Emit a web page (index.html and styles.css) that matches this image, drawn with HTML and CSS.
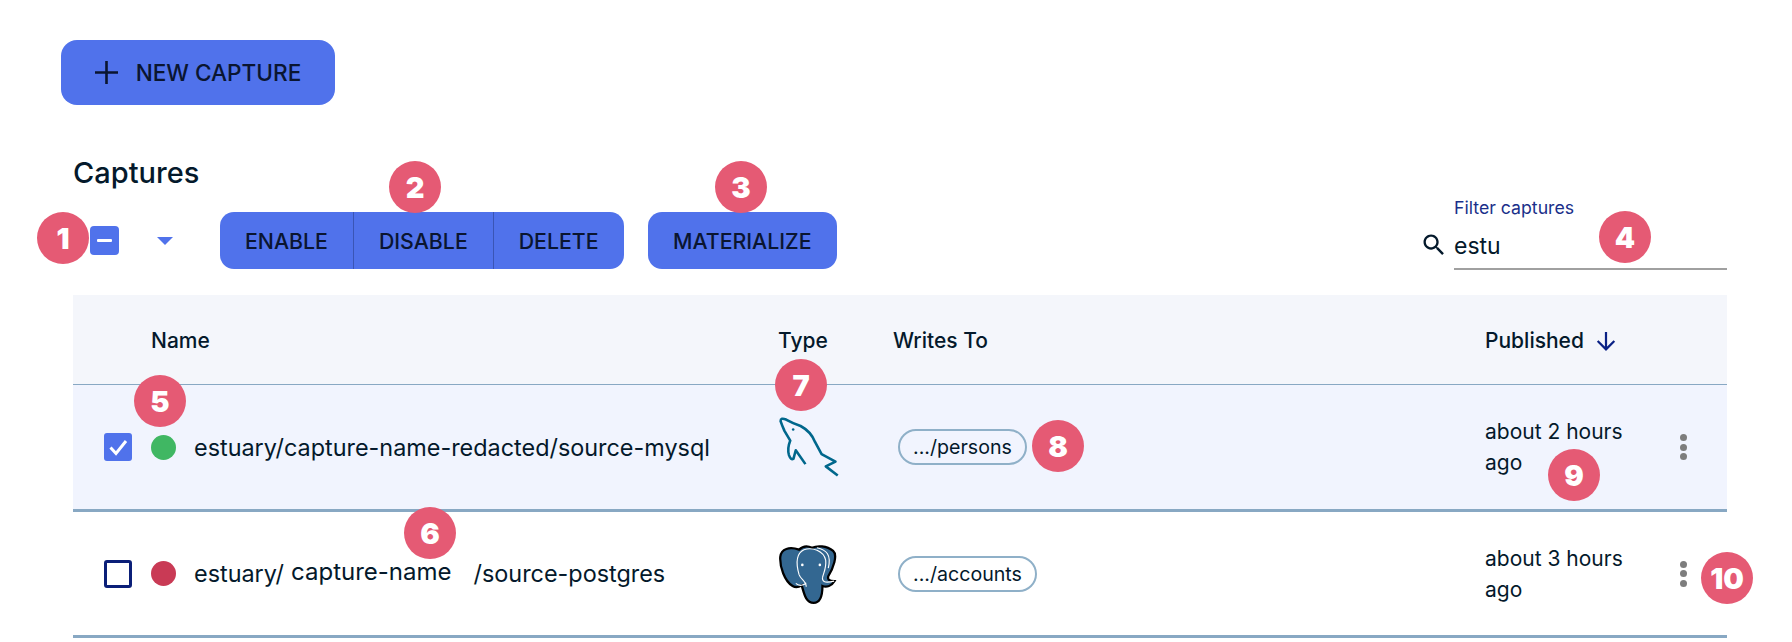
FILE: index.html
```html
<!DOCTYPE html>
<html lang="en">
<head>
  <meta charset="UTF-8">
  <title>Captures</title>
  <link rel="stylesheet" href="styles.css">
</head>
<body>
  <div class="page">
    <button class="btn btn-new">
      <svg class="plus" viewBox="0 0 23 23"><path d="M11.5 0v23M0 11.5h23"/></svg>
      NEW CAPTURE
    </button>
    <h2 class="title">Captures</h2>

    <div class="toolbar">
      <span class="check check-some"><i></i></span>
      <span class="caret"></span>
      <div class="btn-group">
        <button class="btn">ENABLE</button>
        <button class="btn">DISABLE</button>
        <button class="btn">DELETE</button>
      </div>
      <button class="btn btn-mat">MATERIALIZE</button>
      <div class="filter">
        <svg class="search" viewBox="0 0 24 24"><path d="M15.5 14h-.79l-.28-.27C15.41 12.59 16 11.11 16 9.5 16 5.91 13.09 3 9.5 3S3 5.91 3 9.5 5.91 16 9.5 16c1.61 0 3.09-.59 4.23-1.57l.27.28v.79l5 4.99L20.49 19l-4.99-5zm-6 0C7.01 14 5 11.99 5 9.5S7.01 5 9.5 5 14 7.01 14 9.5 11.99 14 9.5 14z"/></svg>
        <div class="filter-field">
          <label>Filter captures</label>
          <div class="filter-value">estu</div>
        </div>
      </div>
    </div>

    <div class="table">
      <div class="row head">
        <div></div>
        <div>Name</div>
        <div>Type</div>
        <div>Writes To</div>
        <div class="sort">Published
          <svg viewBox="0 0 18 18"><path d="M9 1v15.500M1.500 9L9 16.500 16.500 9"/></svg>
        </div>
        <div></div>
      </div>

      <div class="row selected">
        <div class="cell-check"><span class="check check-on"><svg viewBox="0 0 28 28"><path d="M6.500 14.500l5.500 6L22 8"/></svg></span></div>
        <div class="name"><span class="dot green"></span>estuary/capture-name-redacted/source-mysql</div>
        <div class="logo">
          <svg class="mysql" viewBox="80 45 192 190">
            <path d="M265 228L228 200L258 185L215 162L195 125Q182 92 150 75Q125 66 105 55Q88 48 88 60Q92 72 100 90L118 120Q108 145 114 165Q120 182 128 176L135 150L165 193"/>
            <circle class="mysql-eye" cx="127" cy="86" r="4"/>
          </svg>
        </div>
        <div><span class="chip">.../persons</span></div>
        <div class="when">about 2 hours ago</div>
        <div class="more"><i></i><i></i><i></i></div>
      </div>

      <div class="row">
        <div class="cell-check"><span class="check"></span></div>
        <div class="name"><span class="dot red"></span>estuary/<span class="redacted">capture-name</span>/source-postgres</div>
        <div class="logo">
          <svg class="pg" viewBox="85 48 185 190">
            <path class="pg-body" d="M150 68C120 58 95 65 92 90C90 120 105 165 130 180C140 186 150 183 158 178C166 205 170 231 195 232C215 232 222 210 222 180C235 185 250 180 259 165C240 165 238 158 240 150C255 125 270 85 255 72C235 55 205 55 190 62C175 55 160 58 150 68Z"/>
            <path class="pg-line" d="M150 145C140 110 140 80 165 68C190 60 225 70 232 100C235 125 225 140 222 155M150 145C155 160 172 165 172 182M205 62C235 68 250 85 240 125M222 155C222 170 235 170 258 165M140 172C150 182 165 178 172 170"/>
            <circle class="pg-eye" cx="160" cy="115" r="4"/>
            <circle class="pg-eye" cx="214" cy="115" r="4"/>
          </svg>
        </div>
        <div><span class="chip">.../accounts</span></div>
        <div class="when">about 3 hours ago</div>
        <div class="more"><i></i><i></i><i></i></div>
      </div>
    </div>

    <span class="badge b1">1</span>
    <span class="badge b2">2</span>
    <span class="badge b3">3</span>
    <span class="badge b4">4</span>
    <span class="badge b5">5</span>
    <span class="badge b6">6</span>
    <span class="badge b7">7</span>
    <span class="badge b8">8</span>
    <span class="badge b9">9</span>
    <span class="badge b10">10</span>
  </div>
</body>
</html>
```

FILE: styles.css
```css
* { margin:0; padding:0; box-sizing:border-box; }
body { font-family:Inter,"Liberation Sans",sans-serif; background:#fff; color:#04192b; overflow:hidden; }
.page { position:relative; width:1792px; height:642px; padding:40px 65px 0 73px; }

.btn { display:inline-flex; align-items:center; justify-content:center; height:57px; padding:0 25px;
       border:0; background:#5072eb; color:#0a1530; font:500 21.300px Inter,sans-serif; border-radius:14px; }
.btn-new { width:274px; height:65px; margin-left:-12px; gap:18px; font-size:22.600px; border-radius:16px; display:flex; }
.plus { width:23px; height:23px; }
.plus path { stroke:#0a1530; stroke-width:2.6; fill:none; }
.title { font-size:29px; font-weight:500; line-height:32px; margin-top:52px; }

.toolbar { display:flex; align-items:center; height:57px; margin-top:23px; padding-left:17px; }
.check { display:inline-flex; align-items:center; justify-content:center; width:28px; height:28px;
         border:3px solid #0b1f78; border-radius:3px; }
.check-some { width:29px; height:29px; background:#5072eb; border:0; border-radius:4px; }
.check-some i { width:15px; height:3px; background:#fff; border-radius:1px; }
.check-on { background:#5072eb; border:0; }
.check-on svg { width:28px; height:28px; }
.check-on path { stroke:#fff; stroke-width:3; fill:none; }
.caret { width:0; height:0; margin-left:38px; border:8px solid transparent; border-top:8px solid #5072eb; border-bottom:0; }
.btn-group { display:flex; margin-left:47px; background:#5072eb; border-radius:14px; }
.btn-group .btn { border-radius:0; background:none; }
.btn-group .btn + .btn { border-left:1px solid #3a55b5; }
.btn-mat { margin-left:24px; padding:0 25.500px; }

.filter { display:flex; align-items:flex-end; gap:6px; margin-left:auto; align-self:flex-end; margin-bottom:-1px; }
.search { width:28px; height:28px; fill:#04192b; margin-bottom:11px; }
.filter-field { width:273px; height:73px; border-bottom:2px solid #a0a0a0; }
.filter-field label { display:block; font-size:17.700px; color:#1a2f8a; line-height:22px; }
.filter-value { font-size:23px; line-height:32px; margin-top:11px; }

.table { margin-top:26px; }
.row { display:grid; grid-template-columns:78px 627px 115px 592px 175px 67px; align-items:center;
       height:126px; border-bottom:3px solid #88a8c3; font-size:21px; }
.head { height:90px; background:#f4f6fb; border-bottom:1px solid #88a8c3; font-weight:500; padding-top:2px; }
.selected { background:#f1f4fe; height:127px; }
.cell-check { padding-left:31px; display:flex; }
.name { display:flex; align-items:center; font-size:23.400px; white-space:pre; }
.dot { width:25px; height:25px; border-radius:50%; margin-right:18px; }
.green { background:#40b763; }
.red { background:#c93a55; }
.redacted { font-size:24px; margin:-4px 22px 0 7px; }
.sort { display:flex; align-items:center; gap:12px; }
.sort svg { width:20px; height:20px; }
.sort path { stroke:#0a2185; stroke-width:2; fill:none; }
.logo { display:flex; }
.mysql { width:62px; height:62px; }
.mysql path { fill:none; stroke:#00678c; stroke-width:8; stroke-linejoin:round; }
.mysql-eye { fill:#00678c; }
.pg { width:60px; height:62px; }
.pg-body { fill:#336791; stroke:#000; stroke-width:7; }
.pg-line { fill:none; stroke:#fff; stroke-width:3.500; }
.pg-eye { fill:#fff; }
.chip { display:inline-block; margin-left:5px; padding:0 13px; height:36px; font-size:19.600px; line-height:32px;
        border:2px solid #8fb0c8; border-radius:18px; background:#fff; }
.selected .chip { background:none; }
.when { line-height:31px; width:150px; }
.more { display:flex; flex-direction:column; gap:2.500px; padding-left:20px; }
.more i { width:7px; height:7px; border-radius:50%; background:#7d7d7d; }

.badge { position:absolute; width:52px; height:52px; border-radius:50%; background:#e55a74; color:#fff;
         display:flex; align-items:center; justify-content:center; font:900 29px Inter,sans-serif; }
.b1 { left:37px; top:212px; }
.b2 { left:389px; top:161px; }
.b3 { left:715px; top:161px; }
.b4 { left:1599px; top:211px; }
.b5 { left:134px; top:375px; }
.b6 { left:404px; top:507px; }
.b7 { left:775px; top:359px; }
.b8 { left:1032px; top:420px; }
.b9 { left:1548px; top:449px; }
.b10 { left:1701px; top:552px; }
```
